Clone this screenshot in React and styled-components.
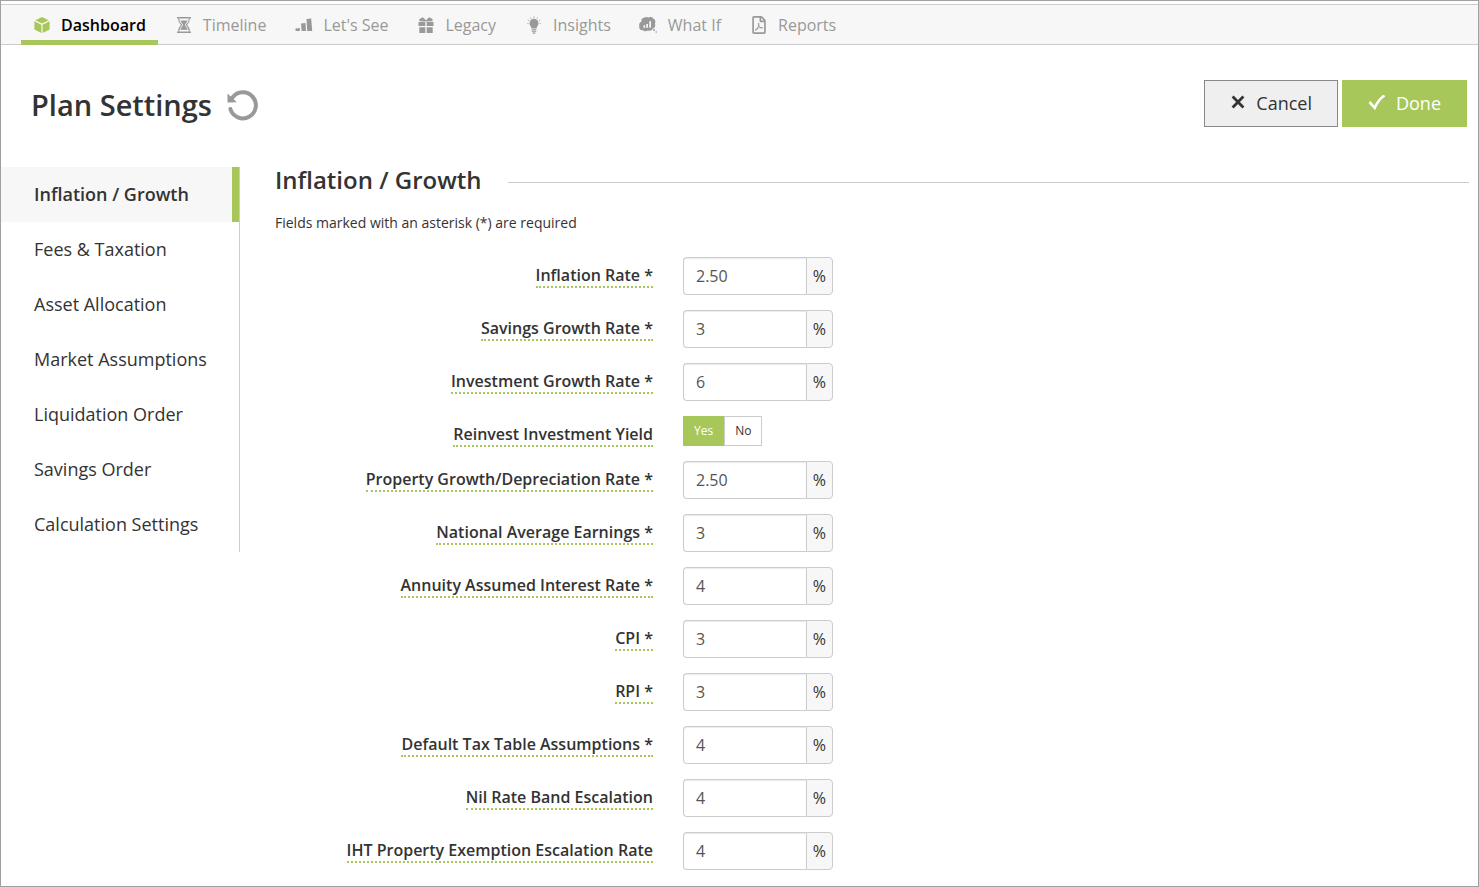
import React, { useState } from "react";
import styled, { createGlobalStyle, css } from "styled-components";
import { FaRegFilePdf } from "react-icons/fa";

const NAV_ITEMS = [
  { label: "Dashboard", icon: CubeIcon },
  { label: "Timeline", icon: HourglassIcon },
  { label: "Let's See", icon: BarsIcon },
  { label: "Legacy", icon: GiftIcon },
  { label: "Insights", icon: BulbIcon },
  { label: "What If", icon: WhatIfIcon },
  { label: "Reports", icon: ReportIcon },
];

const SECTIONS = [
  "Inflation / Growth",
  "Fees & Taxation",
  "Asset Allocation",
  "Market Assumptions",
  "Liquidation Order",
  "Savings Order",
  "Calculation Settings",
];

const FIELDS = [
  { id: "inflation", label: "Inflation Rate *", value: "2.50" },
  { id: "savings", label: "Savings Growth Rate *", value: "3" },
  { id: "investment", label: "Investment Growth Rate *", value: "6" },
  { id: "reinvest", label: "Reinvest Investment Yield", toggle: true },
  { id: "property", label: "Property Growth/Depreciation Rate *", value: "2.50" },
  { id: "earnings", label: "National Average Earnings *", value: "3" },
  { id: "annuity", label: "Annuity Assumed Interest Rate *", value: "4" },
  { id: "cpi", label: "CPI *", value: "3" },
  { id: "rpi", label: "RPI *", value: "3" },
  { id: "tax", label: "Default Tax Table Assumptions *", value: "4" },
  { id: "nilrate", label: "Nil Rate Band Escalation", value: "4" },
  { id: "iht", label: "IHT Property Exemption Escalation Rate", value: "4" },
];

function CubeIcon() {
  return (
    <svg width="16" height="16" viewBox="0 0 16 16" fill="currentColor">
      <path d="M8 0 14.600 3.200 8 6.500 1.400 3.200Z" />
      <path d="M0.400 4.200 7.400 7.700V16L0.400 12.400Z" />
      <path d="M15.600 4.200 8.600 7.700V16L15.600 12.400Z" />
    </svg>
  );
}

function HourglassIcon() {
  return (
    <svg width="16" height="16" viewBox="0 0 16 16" fill="currentColor">
      <path d="M1 0h14v1.6H1zM1 14.4h14V16H1z" />
      <path
        d="M2.6 1.5C2.6 5 4 6.4 5.6 8 4 9.6 2.6 11 2.6 14.5M13.4 1.5C13.4 5 12 6.4 10.4 8c1.6 1.6 3 3 3 6.5"
        fill="none"
        stroke="currentColor"
        strokeWidth="1.1"
      />
      <path d="M4.600 3.500h6.800C11 5.400 9.400 6.600 8.900 8c.5 1.600 2.500 2.800 2.900 4.800H4.200C4.600 10.800 6.600 9.600 7.100 8 6.600 6.600 5 5.400 4.600 3.500Z" />
    </svg>
  );
}

function BarsIcon() {
  return (
    <svg width="18" height="14" viewBox="0 0 18 14" fill="currentColor">
      <path d="M0.500 10.500 4.800 10v3H0.500zM6 5.400l4.500-.4.500 8H6.600zM11.500 1l4.700-.5L17.200 13h-5z" />
    </svg>
  );
}

function GiftIcon() {
  return (
    <svg width="16" height="16" viewBox="0 0 16 16" fill="currentColor">
      <path d="M0.500 5h6.800v4H0.500zM8.700 5h6.800v4H8.700zM1.300 10.200h6V16h-6zM8.700 10.200h6V16h-6z" />
      <path d="M7.300 4.600 1.500 4.300C.8 2.600 1.800 1 3.400 1.300L4.200.2C5.800.5 6.800 2.300 8 3.600 9.200 2.300 10.200.5 11.800.2l.8 1.100c1.600-.3 2.600 1.300 1.900 3L8.700 4.600Z" />
    </svg>
  );
}

function BulbIcon() {
  return (
    <svg width="16" height="18" viewBox="0 0 16 18" fill="currentColor">
      <path d="M8 2.800a4.500 4.500 0 0 1 4.500 4.500c0 2.300-1.700 3.100-2 5.300H5.500c-.3-2.200-2-3-2-5.300A4.500 4.500 0 0 1 8 2.800zM5.600 13.300h4.800v1.200H5.600zM5.900 15.200h4.200v1H5.900zM6.800 16.700h2.400v1H6.800z" />
      <path
        d="M8 .5v1.300M4.300 1.500l.6 1M11.700 1.500l-.6 1M1.800 4l1 .6M14.200 4l-1 .6M1.500 7.500h.9M13.600 7.500h.9"
        stroke="currentColor"
        strokeWidth="1"
      />
    </svg>
  );
}

function WhatIfIcon() {
  return (
    <svg width="20" height="16" viewBox="0 0 20 16" fill="currentColor">
      <path d="M5 .8C6.500-.2 8.300 0 9.200.6c1.500-1 4.500-.8 5.300 1.200 1.900.6 2.300 3 1.400 4.900 1 2-.2 4.800-2.300 5-.8 2-3 2.500-4.700 1.800-1.700 1.100-4 1-5-.3C1.500 13.700-.3 12 .4 9.500-.3 7.500.6 5.500 2.400 4.800 2 3 3.200 1 5 .8Z" />
      <path d="M4.500 8.300h1.700v2.400H4.500zM7.300 7H9v3.700H7.300zM10.300 4.200H12v6.500h-1.700z" fill="#f7f7f7" />
      <circle cx="15" cy="13" r="1" />
      <circle cx="17.200" cy="15" r="0.800" />
    </svg>
  );
}

function ReportIcon() {
  return <FaRegFilePdf size={18} />;
}

function ResetIcon() {
  return (
    <svg width="32" height="32" viewBox="0 0 32 32">
      <path
        d="M3.400 20A13 13 0 1 0 5.500 8.500"
        fill="none"
        stroke="currentColor"
        strokeWidth="4"
        strokeLinecap="round"
      />
      <path d="M0.500 4.500 9.800 13.300 0.500 13.600Z" fill="currentColor" />
    </svg>
  );
}

function CrossIcon() {
  return (
    <svg width="16" height="16" viewBox="0 0 16 16" fill="none" stroke="currentColor" strokeWidth="2.800">
      <path d="M2.600 1.600 13.400 12.400M13.400 1.600 2.600 12.400" />
    </svg>
  );
}

function TickIcon() {
  return (
    <svg width="18" height="16" viewBox="0 0 18 16" fill="none" stroke="currentColor" strokeWidth="2.600">
      <path d="M1.500 7 6.800 12.800C9 7.500 12 3.500 16.500 0.500" />
    </svg>
  );
}

function App() {
  const [section, setSection] = useState(SECTIONS[0]);
  const [reinvest, setReinvest] = useState("Yes");

  return (
    <Page>
      <GlobalStyle />
      <NavBar>
        {NAV_ITEMS.map(({ label, icon: Icon }, i) => (
          <NavLink key={label} href="#" $active={i === 0}>
            <NavIcon $active={i === 0}>
              <Icon />
            </NavIcon>
            {label}
          </NavLink>
        ))}
      </NavBar>

      <Header>
        <Title>Plan Settings</Title>
        <ResetButton type="button" aria-label="Reset settings">
          <ResetIcon />
        </ResetButton>
        <Actions>
          <ActionButton type="button">
            <CrossIcon />
            Cancel
          </ActionButton>
          <ActionButton type="button" $primary>
            <TickIcon />
            Done
          </ActionButton>
        </Actions>
      </Header>

      <Body>
        <SideMenu>
          {SECTIONS.map((name) => (
            <SideItem
              key={name}
              type="button"
              $active={name === section}
              onClick={() => setSection(name)}
            >
              {name}
            </SideItem>
          ))}
        </SideMenu>

        <Content>
          <SectionTitle>Inflation / Growth</SectionTitle>
          <Hint>Fields marked with an asterisk (*) are required</Hint>
          {FIELDS.map((field) => (
            <Row key={field.id}>
              <LabelCell>
                <Label
                  id={field.id + "-label"}
                  as={field.toggle ? "span" : "label"}
                  htmlFor={field.toggle ? undefined : field.id}
                >
                  {field.label}
                </Label>
              </LabelCell>
              {field.toggle ? (
                <Toggle role="group" aria-labelledby={field.id + "-label"}>
                  {["Yes", "No"].map((option) => (
                    <ToggleButton
                      key={option}
                      type="button"
                      aria-pressed={reinvest === option}
                      $on={reinvest === option}
                      onClick={() => setReinvest(option)}
                    >
                      {option}
                    </ToggleButton>
                  ))}
                </Toggle>
              ) : (
                <InputGroup>
                  <Input id={field.id} type="text" defaultValue={field.value} />
                  <Addon>%</Addon>
                </InputGroup>
              )}
            </Row>
          ))}
        </Content>
      </Body>
    </Page>
  );
}

//STYLED-COMPONENTS

const GlobalStyle = createGlobalStyle`
  *, *::before, *::after {
    box-sizing: border-box;
  }

  body {
    margin: 0;
    background: #fff;
    color: #333;
    font-family: "Open Sans", "Noto Sans", sans-serif;
    font-size: 16px;
  }

  button, input {
    font-family: inherit;
    margin: 0;
  }
`

const Page = styled.div`
  min-height: 100vh;
  padding-top: 3px;
  border: 1px solid #a0a0a0;
`

const NavBar = styled.nav`
  display: flex;
  gap: 5px;
  height: 41px;
  padding-left: 20px;
  background: #f7f7f7;
  border-top: 1px solid #ccc;
  border-bottom: 1px solid #ccc;
`

const NavLink = styled.a`
  display: flex;
  align-items: center;
  gap: 9px;
  height: 40px;
  padding: 4px 12px 0 11px;
  color: #999;
  text-decoration: none;
  white-space: nowrap;
  border-bottom: 5px solid transparent;

  ${props => props.$active && css`
    color: #000;
    font-weight: 600;
    border-bottom-color: #a7c75a;
  `}
`

const NavIcon = styled.span`
  display: flex;
  justify-content: center;
  width: 20px;
  color: ${props => props.$active ? '#a7c75a' : '#999'};
`

const Header = styled.header`
  display: flex;
  align-items: center;
  padding: 35px 11px 40px 30px;
`

const Title = styled.h1`
  margin: 0;
  padding-top: 2px;
  font-size: 29px;
  line-height: 45px;
  font-weight: 600;
`

const ResetButton = styled.button`
  display: flex;
  margin-left: 15px;
  padding: 3px 0 0;
  border: none;
  background: none;
  color: #999;
  cursor: pointer;
`

const Actions = styled.div`
  display: flex;
  gap: 4px;
  margin-left: auto;
`

const ActionButton = styled.button`
  display: flex;
  align-items: center;
  gap: 10px;
  height: 47px;
  padding: 0 25px 2px;
  border: 1px solid ${props => props.$primary ? '#a7c75a' : '#888'};
  background: ${props => props.$primary ? '#a7c75a' : '#efefef'};
  color: ${props => props.$primary ? '#fff' : '#333'};
  font-size: 18px;
  cursor: pointer;
`

const Body = styled.div`
  display: flex;
  align-items: flex-start;
`

const SideMenu = styled.nav`
  flex: none;
  width: 239px;
  border-right: 1px solid #ccc;
`

const SideItem = styled.button`
  display: block;
  width: 100%;
  height: 55px;
  padding: 0 0 2px 33px;
  border: none;
  border-right: 7px solid ${props => props.$active ? '#a7c75a' : 'transparent'};
  background: ${props => props.$active ? '#f7f7f7' : 'none'};
  color: #333;
  font-size: 18px;
  font-weight: ${props => props.$active ? 600 : 400};
  text-align: left;
  cursor: pointer;
`

const Content = styled.main`
  flex: 1;
  padding: 0 9px 0 35px;
`

const SectionTitle = styled.h2`
  display: flex;
  align-items: center;
  gap: 26px;
  margin: 0;
  font-size: 24px;
  line-height: 26px;
  font-weight: 600;

  &::after {
    content: "";
    flex: 1;
    height: 1px;
    margin-top: 4px;
    background: #ccc;
  }
`

const Hint = styled.p`
  margin: 20px 0 24px;
  font-size: 14px;
  line-height: 20px;
`

const Row = styled.div`
  display: grid;
  grid-template-columns: calc((100% + 30px) / 3 - 30px) 1fr;
  column-gap: 30px;
  margin-bottom: 15px;
`

const LabelCell = styled.div`
  height: 30px;
  padding-top: 7px;
  text-align: right;
`

const Label = styled.label`
  display: inline-block;
  line-height: 22px;
  font-weight: 600;
  white-space: nowrap;
  border-bottom: 2px dotted #a7c75a;
`

const InputGroup = styled.div`
  display: flex;
  width: 150px;
  height: 38px;
`

const Input = styled.input`
  flex: 1;
  min-width: 0;
  padding: 0 12px;
  border: 1px solid #ccc;
  border-right: none;
  border-radius: 4px 0 0 4px;
  box-shadow: inset 0 1px 1px rgba(0, 0, 0, 0.08);
  color: #555;
  font-size: 16px;
`

const Addon = styled.span`
  display: flex;
  align-items: center;
  justify-content: center;
  width: 27px;
  border: 1px solid #ccc;
  border-radius: 0 4px 4px 0;
  background: #f7f7f7;
`

const Toggle = styled.div`
  display: flex;
  height: 30px;
`

const ToggleButton = styled.button`
  padding: 0 10px 1px;
  border: 1px solid ${props => props.$on ? '#a7c75a' : '#ccc'};
  background: ${props => props.$on ? '#a7c75a' : '#fff'};
  color: ${props => props.$on ? '#fff' : '#333'};
  font-size: 12px;
  cursor: pointer;
`

export default App;
